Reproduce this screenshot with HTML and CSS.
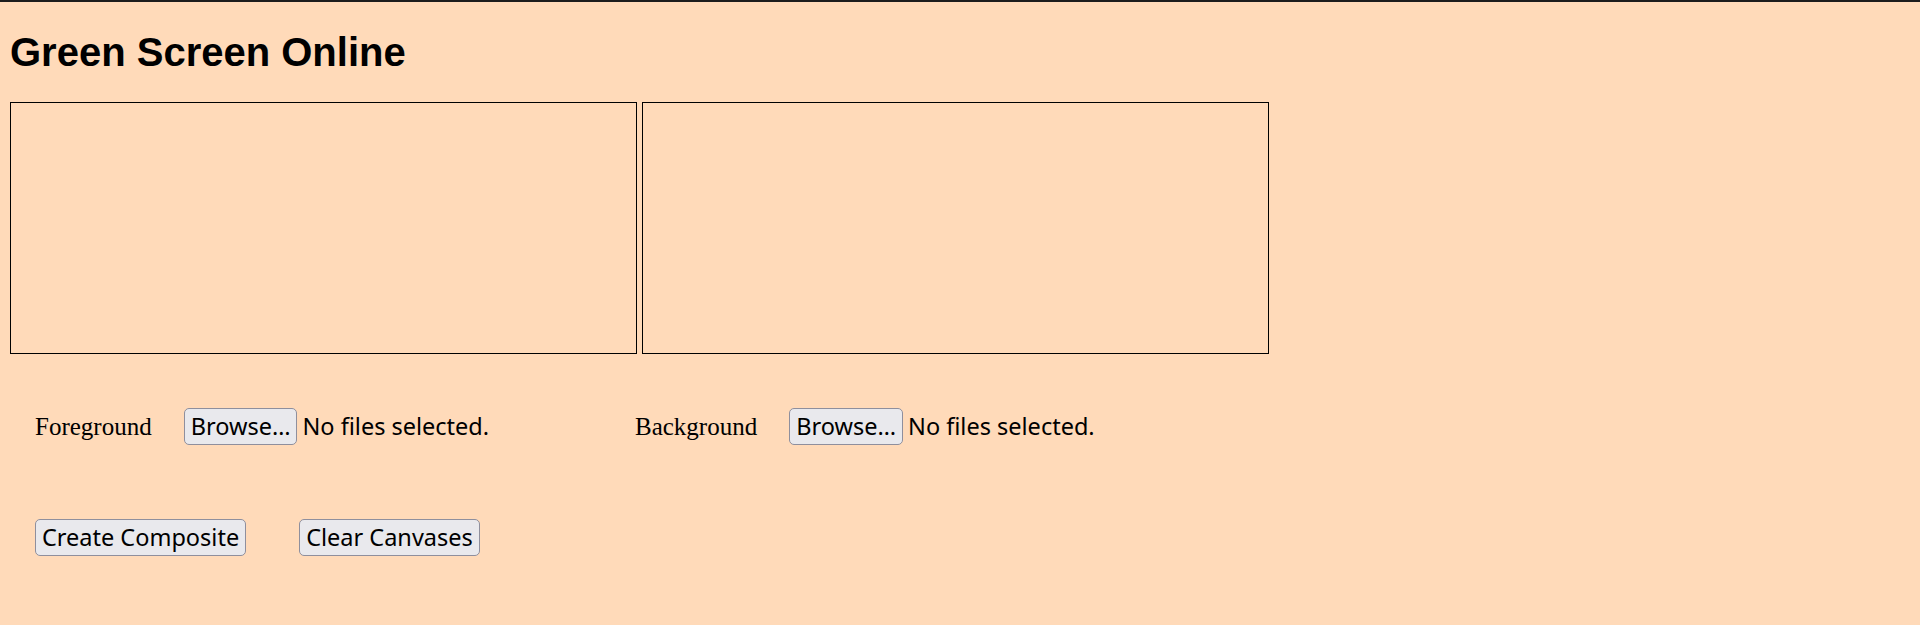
FILE: index.html
```html
<!DOCTYPE html>
<html lang="en">
<head>
<meta charset="utf-8">
<title>Green Screen Online</title>
<link rel="stylesheet" href="styles.css">
</head>
<body>
  <h1 class="title">Green Screen Online</h1>
  <div class="canvases">
    <div class="canvas" id="fgcan"></div>
    <div class="canvas" id="bgcan"></div>
  </div>
  <div class="pickers">
    <div class="picker picker-first">
      <span class="picker-label">Foreground</span>
      <span class="file-input">
        <button class="btn" type="button">Browse…</button>
        <span class="file-status">No files selected.</span>
      </span>
    </div>
    <div class="picker">
      <span class="picker-label">Background</span>
      <span class="file-input">
        <button class="btn" type="button">Browse…</button>
        <span class="file-status">No files selected.</span>
      </span>
    </div>
  </div>
  <div class="actions">
    <button class="btn" type="button">Create Composite</button>
    <button class="btn" type="button">Clear Canvases</button>
  </div>
</body>
</html>
```

FILE: styles.css
```css
html {
  background: #ffdab9;
  border-top: 2px solid #1c1c1c;
}

body {
  margin: 0;
  padding: 0 10px;
  color: #000;
  font-family: "Liberation Serif", "Times New Roman", serif;
}

.title {
  margin: 27px 0;
  font-family: "Liberation Sans", Arial, sans-serif;
  font-size: 40px;
  line-height: 46px;
  font-weight: bold;
}

.canvases {
  display: flex;
  gap: 5px;
}

.canvas {
  width: 625px;
  height: 250px;
  border: 1px solid #000;
}

.pickers {
  display: flex;
  align-items: baseline;
  padding: 54px 0 0 25px;
}

.picker {
  display: flex;
  align-items: baseline;
}

.picker-first {
  width: 600px;
}

.picker-label {
  font-size: 25px;
  margin-right: 32px;
}

.file-input {
  display: flex;
  align-items: baseline;
  gap: 5px;
}

.file-status {
  font-family: "Noto Sans", "Open Sans", sans-serif;
  font-size: 23.5px;
  line-height: 33px;
}

.btn {
  font-family: "Noto Sans", "Open Sans", sans-serif;
  font-size: 23.5px;
  line-height: 33px;
  color: #000;
  background: #e9e9ed;
  border: 1px solid #8f8f9d;
  border-radius: 5px;
  padding: 1px 6px;
  margin: 0;
}

.actions {
  display: flex;
  gap: 53px;
  padding: 74px 0 0 25px;
}
```
